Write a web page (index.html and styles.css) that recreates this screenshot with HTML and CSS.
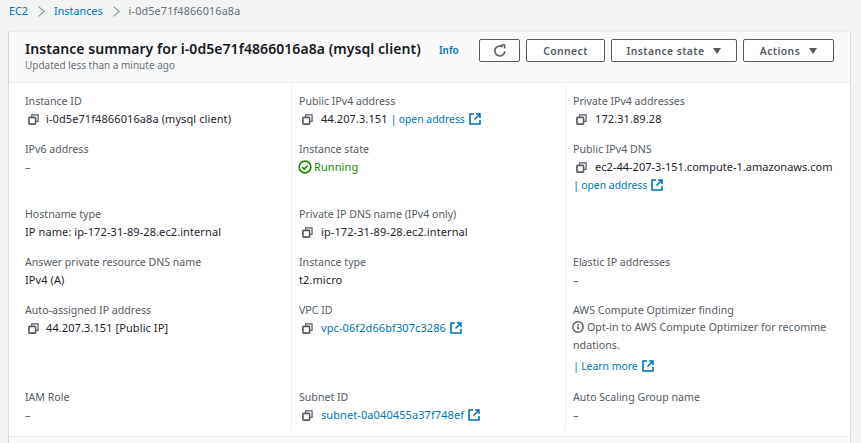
FILE: index.html
```html
<!DOCTYPE html>
<html lang="en">
<head>
<meta charset="utf-8">
<title>Instance summary</title>
<link rel="stylesheet" href="styles.css">
</head>
<body>
<svg class="defs" width="0" height="0" aria-hidden="true">
  <symbol id="copy" viewBox="0 0 12 12"><path d="M4 3V1h7v7H9" fill="none" stroke="currentColor" stroke-width="1.3"/><rect x="1" y="3.7" width="7.3" height="7.3" rx=".8" fill="none" stroke="currentColor" stroke-width="1.8"/></symbol>
  <symbol id="ext" viewBox="0 0 12 12"><path d="M5 1H1v10h10V7" fill="none" stroke="currentColor" stroke-width="1.6"/><path d="M7 1h4v4M11 1 5.5 6.5" fill="none" stroke="currentColor" stroke-width="1.6"/></symbol>
</svg>
<nav class="crumbs">
  <a href="#">EC2</a>
  <svg class="sep" viewBox="0 0 7 11"><path d="M.6.6l5.6 4.9-5.6 4.9" fill="none" stroke="currentColor" stroke-width="1.1"/></svg>
  <a href="#">Instances</a>
  <svg class="sep" viewBox="0 0 7 11"><path d="M.6.6l5.6 4.9-5.6 4.9" fill="none" stroke="currentColor" stroke-width="1.1"/></svg>
  <span class="here">i-0d5e71f4866016a8a</span>
</nav>
<main class="card">
  <header class="head">
    <div class="titles">
      <h1>Instance summary for i-0d5e71f4866016a8a (mysql client)</h1>
      <p>Updated less than a minute ago</p>
    </div>
    <a class="info" href="#">Info</a>
    <div class="actions">
      <button class="btn refresh" aria-label="Refresh"><svg viewBox="0 0 14 14"><path d="M11.8 7.2A5 5 0 1 1 9.6 2.8" fill="none" stroke="currentColor" stroke-width="1.6"/><path d="M8.2 .9h3.4v3.5" fill="none" stroke="currentColor" stroke-width="1.5"/></svg></button>
      <button class="btn connect">Connect</button>
      <button class="btn state">Instance state<i class="caret"></i></button>
      <button class="btn acts">Actions<i class="caret"></i></button>
    </div>
  </header>
  <section class="grid">
    <div class="cell"><div class="lab">Instance ID</div><div class="val"><svg class="copy"><use href="#copy"/></svg>i-0d5e71f4866016a8a (mysql client)</div></div>
    <div class="cell"><div class="lab">Public IPv4 address</div><div class="val"><svg class="copy"><use href="#copy"/></svg>44.207.3.151&nbsp;<b class="bar">|</b><a class="gap" href="#">open address</a><svg class="ext"><use href="#ext"/></svg></div></div>
    <div class="cell"><div class="lab">Private IPv4 addresses</div><div class="val"><svg class="copy"><use href="#copy"/></svg>172.31.89.28</div></div>

    <div class="cell"><div class="lab">IPv6 address</div><div class="val dash">–</div></div>
    <div class="cell"><div class="lab">Instance state</div><div class="val run"><svg class="ok" viewBox="0 0 14 14"><circle cx="7" cy="7" r="5.9" fill="none" stroke="currentColor" stroke-width="1.6"/><path d="M4.3 7.1l2 2 3.4-3.6" fill="none" stroke="currentColor" stroke-width="1.5"/></svg>Running</div></div>
    <div class="cell"><div class="lab">Public IPv4 DNS</div><div class="val"><svg class="copy"><use href="#copy"/></svg><span class="tight">ec2-44-207-3-151.compute-1.amazonaws.com</span></div><div class="val flush"><b class="bar">|</b><a class="gap" href="#">open address</a><svg class="ext"><use href="#ext"/></svg></div></div>

    <div class="cell"><div class="lab">Hostname type</div><div class="val">IP name: ip-172-31-89-28.ec2.internal</div></div>
    <div class="cell"><div class="lab">Private IP DNS name (IPv4 only)</div><div class="val"><svg class="copy"><use href="#copy"/></svg>ip-172-31-89-28.ec2.internal</div></div>
    <div class="cell"></div>

    <div class="cell"><div class="lab">Answer private resource DNS name</div><div class="val">IPv4 (A)</div></div>
    <div class="cell"><div class="lab">Instance type</div><div class="val">t2.micro</div></div>
    <div class="cell"><div class="lab">Elastic IP addresses</div><div class="val dash">–</div></div>

    <div class="cell"><div class="lab">Auto-assigned IP address</div><div class="val"><svg class="copy"><use href="#copy"/></svg>44.207.3.151 [Public IP]</div></div>
    <div class="cell"><div class="lab">VPC ID</div><div class="val"><svg class="copy"><use href="#copy"/></svg><a href="#">vpc-06f2d66bf307c3286</a><svg class="ext"><use href="#ext"/></svg></div></div>
    <div class="cell opt"><div class="lab">AWS Compute Optimizer finding</div><div class="val wrap"><svg class="inf" viewBox="0 0 12 12"><circle cx="6" cy="6" r="5.2" fill="none" stroke="currentColor" stroke-width="1.4"/><path d="M6 5.2v3.3" stroke="currentColor" stroke-width="1.6"/><path d="M6 3v1.5" stroke="currentColor" stroke-width="1.6"/></svg>Opt-in to AWS Compute Optimizer for recommendations.</div><div class="val learn"><b class="bar">|</b><a class="gap" href="#">Learn more</a><svg class="ext"><use href="#ext"/></svg></div></div>

    <div class="cell"><div class="lab">IAM Role</div><div class="val dash">–</div></div>
    <div class="cell"><div class="lab">Subnet ID</div><div class="val"><svg class="copy"><use href="#copy"/></svg><a href="#">subnet-0a040455a37f748ef</a><svg class="ext"><use href="#ext"/></svg></div></div>
    <div class="cell"><div class="lab">Auto Scaling Group name</div><div class="val dash">–</div></div>
  </section>
  <div class="foot"></div>
</main>
</body>
</html>
```
FILE: styles.css
```css
* { box-sizing: border-box; }
html, body { height: 100%; }
body {
  margin: 0;
  background: #f2f3f3;
  font-family: "Noto Sans", sans-serif;
  font-size: 11px;
  line-height: 18px;
  color: #16191f;
  overflow: hidden;
}
a { color: #0073bb; text-decoration: none; }
.defs { position: absolute; }
.crumbs {
  height: 22px;
  margin-bottom: 9px;
  padding: 0 0 0 9px;
  display: flex;
  align-items: center;
  font-size: 10.8px;
  color: #687078;
}
.crumbs a { color: #0073bb; }
.here { letter-spacing: .15px; }
.sep { width: 7px; height: 11px; margin: 0 9px 0 10px; color: #879596; }
.card {
  margin-left: 8px;
  width: 843px;
  background: #fff;
  border-top: 1px solid #eaeded;
  border-right: 1px solid #d5dbdb;
  border-left: 1px solid #d5dbdb;
}
.head {
  height: 51px;
  background: #fafafa;
  border-bottom: 1px solid #eaeded;
  padding: 7px 16px 0 16px;
  display: flex;
  align-items: flex-start;
}
.titles { width: 414px; }
h1 {
  margin: 0;
  font-size: 14px;
  line-height: 20px;
  font-weight: 600;
  letter-spacing: .06px;
  white-space: nowrap;
}
.titles p { margin: -1px 0 0; font-size: 10px; line-height: 14px; color: #687078; }
.info { font-size: 9.8px; font-weight: 600; margin-top: 3px; width: 40px; color: #0073bb; }
.actions { display: flex; gap: 6px; margin-top: 0; }
.btn {
  height: 23px;
  background: #fff;
  border: 1px solid #545b64;
  border-radius: 2px;
  color: #545b64;
  font: 600 10.4px/18px "Noto Sans", sans-serif;
  letter-spacing: .4px;
  padding: 0;
  display: flex;
  align-items: center;
  justify-content: center;
}
.refresh { width: 41px; }
.refresh svg { width: 14px; height: 14px; }
.connect { width: 79px; }
.state { width: 126px; }
.acts { width: 91px; }
.caret {
  width: 0; height: 0;
  margin-left: 9px;
  border-left: 4.5px solid transparent;
  border-right: 4.5px solid transparent;
  border-top: 6px solid #545b64;
}
.grid {
  display: grid;
  grid-template-columns: 282px 274px 1fr;
  grid-template-rows: 48px 65px 48px 48px 87px 48px;
  padding: 3px 0 6px;
}
.cell { padding: 6px 16px 0 7px; border-left: 1px solid #eaeded; min-width: 0; }
.cell:nth-child(3n+1) { border-left: 0; padding-left: 16px; }
.opt { padding-right: 22px; }
.lab { color: #545b64; font-size: 10.6px; line-height: 18px; white-space: nowrap; }
.val { display: flex; align-items: center; min-height: 17px; color: #1e232b; letter-spacing: .09px; white-space: nowrap; }
.tight { letter-spacing: .02px; }
.dash { color: #545b64; }
.val.flush { height: 18px; color: #545b64; }
.copy { width: 11px; height: 11px; margin: 0 8px 0 3px; color: #545b64; flex: none; }
.cell:nth-child(3n+1) .copy { margin-right: 7px; }
.ext { width: 12px; height: 12px; margin-left: 4px; color: #0073bb; flex: none; }
.bar { color: #0073bb; font-weight: 400; }
.gap { margin-left: 2px; font-size: 10.4px; letter-spacing: 0; }
.run { color: #1d8102; }
.ok { width: 14px; height: 14px; margin: 0 2px 0 -1px; flex: none; }
.wrap { display: block; white-space: normal; word-break: break-all; color: #545b64; font-size: 10.7px; letter-spacing: 0; line-height: 17.5px; }
.inf { width: 12px; height: 12px; margin: 0 3px 0 -1px; vertical-align: -2px; color: #545b64; }
.learn { margin-top: 3px; }
.foot { height: 8px; border-top: 1px solid #eaeded; background: #fafafa; }
```
